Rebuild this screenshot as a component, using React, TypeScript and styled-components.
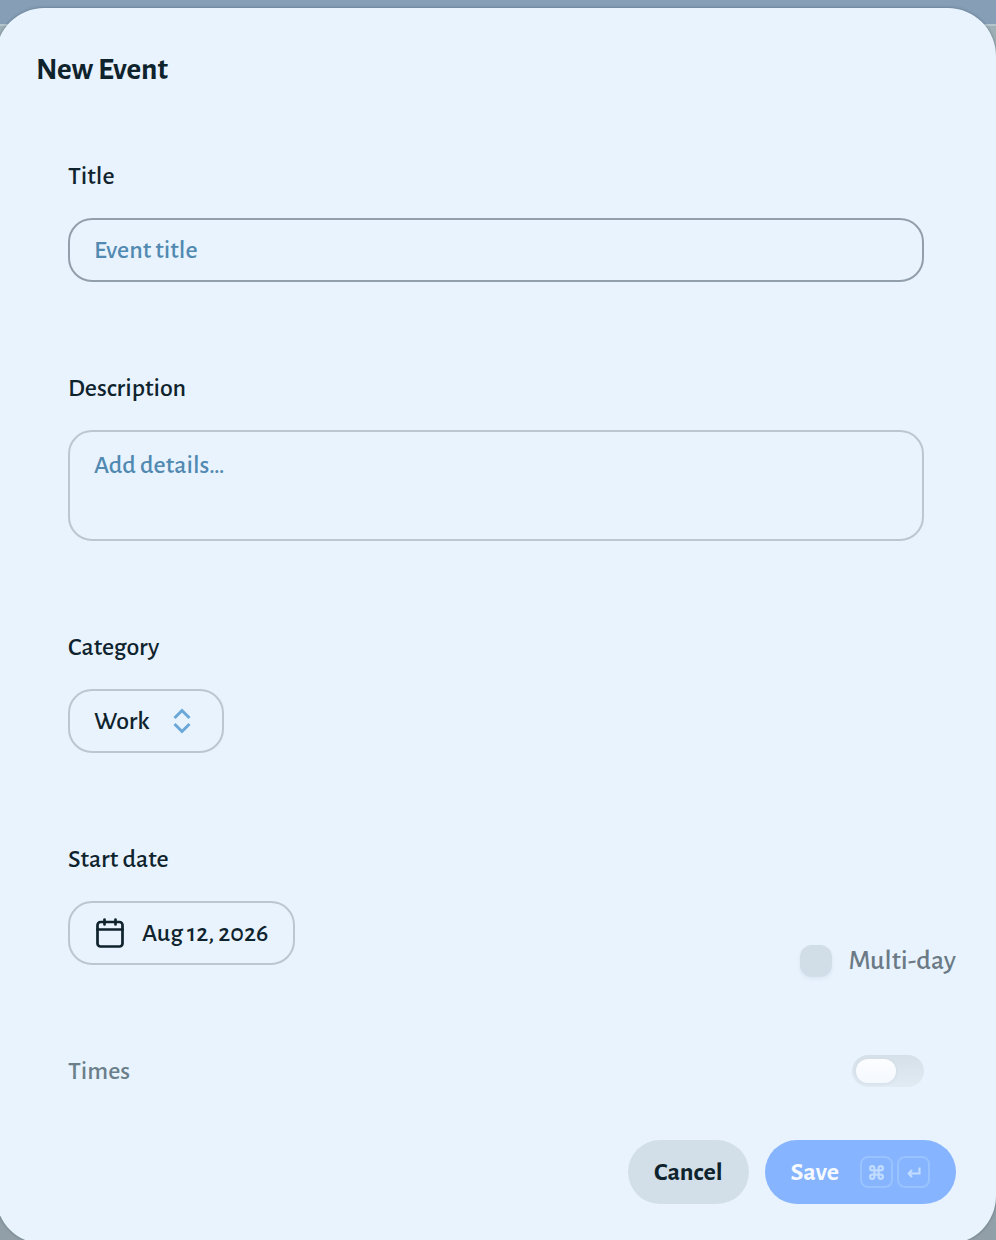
import React, { useState } from "react";
import styled, { createGlobalStyle } from "styled-components";

const ink = "#0f232d";
const edge = "#bcc6d0";
const edgeFocus = "#929fab";

const GlobalStyle = createGlobalStyle`
  *, *::before, *::after { box-sizing: border-box; }
  html { height: 100%; }
  body {
    margin: 0;
    min-height: 100%;
    overflow: hidden;
    color: ${ink};
    font-family: "Alegreya Sans", Lato, "Open Sans", sans-serif;
    font-weight: 500;
    background: linear-gradient(#869eb6 0 24px, #b4c5cd 24px 26px, #9eafb6 26px, #919fa8 100%) fixed;
  }
  button, input, select, textarea { font: inherit; color: inherit; margin: 0; }
`;

const Dialog = styled.form`
  display: flex;
  flex-direction: column;
  margin: 8px 0 0 -4px;
  padding: 40px;
  border-radius: 48px;
  background: #e8f3fe;
  box-shadow: 0 0 3px rgba(15, 35, 45, 0.4);
`;

const Heading = styled.h1`
  margin: 0;
  font-size: 31px;
  line-height: 44px;
  font-weight: 700;
`;

const Fields = styled.div`
  display: flex;
  flex-direction: column;
  gap: 92px;
  padding: 70px 32px 0;
`;

const Field = styled.div`
  display: flex;
  flex-direction: column;
  align-items: flex-start;
  gap: 28px;
`;

const Label = styled.label<{ $faded?: boolean }>`
  font-size: 26px;
  line-height: 28px;
  color: ${(p) => (p.$faded ? "#6b7f8a" : ink)};
`;

const TextInput = styled.input`
  width: 100%;
  height: 64px;
  padding: 0 24px;
  border: 2px solid ${edgeFocus};
  border-radius: 24px;
  outline: none;
  background: transparent;
  font-size: 26px;
  &::placeholder { color: #5189b1; opacity: 1; }
`;

const TextArea = styled.textarea`
  display: block;
  width: 100%;
  height: 111px;
  padding: 19px 24px;
  border: 2px solid ${edge};
  border-radius: 24px;
  outline: none;
  resize: none;
  background: transparent;
  font-size: 26px;
  line-height: 28px;
  &::placeholder { color: #5189b1; opacity: 1; }
`;

const SelectWrap = styled.div`
  position: relative;
  svg {
    position: absolute;
    right: 32px;
    top: 18px;
    pointer-events: none;
  }
`;

const Select = styled.select`
  appearance: none;
  width: 156px;
  height: 64px;
  padding: 0 24px;
  border: 2px solid ${edge};
  border-radius: 24px;
  background: transparent;
  font-size: 26px;
`;

const DateButton = styled.button`
  display: flex;
  align-items: center;
  gap: 16px;
  height: 64px;
  padding: 0 25px 0 24px;
  border: 2px solid ${edge};
  border-radius: 24px;
  background: transparent;
  font-size: 26px;
`;

const DateRow = styled.div`
  display: flex;
  justify-content: space-between;
  align-items: flex-end;
  margin-right: -32px;
`;

const CheckLabel = styled.label`
  display: flex;
  align-items: center;
  gap: 16px;
  margin-bottom: -12px;
  font-size: 28px;
  line-height: 32px;
  color: #6b7a85;
`;

const Checkbox = styled.input`
  appearance: none;
  width: 32px;
  height: 32px;
  border-radius: 12px;
  background: #d2dee7;
  box-shadow: 0 2px 4px rgba(15, 35, 45, 0.06);
  &:checked { background: #86b4fe; }
`;

const TimesRow = styled.div`
  display: flex;
  justify-content: space-between;
  align-items: center;
  margin-top: -2px;
`;

const Switch = styled.input`
  appearance: none;
  width: 72px;
  height: 32px;
  padding: 4px;
  border-radius: 16px;
  background: linear-gradient(#d5e0e9, #e1ebf4);
  &::before {
    content: "";
    display: block;
    width: 40px;
    height: 24px;
    border-radius: 12px;
    background: linear-gradient(#fcfdff, #f4f9fe);
    box-shadow: 0 1px 4px rgba(15, 35, 45, 0.06);
  }
  &:checked::before { margin-left: 24px; }
`;

const Footer = styled.footer`
  display: flex;
  justify-content: flex-end;
  gap: 16px;
  padding-top: 53px;
`;

const Button = styled.button<{ $primary?: boolean }>`
  display: flex;
  align-items: center;
  height: 64px;
  padding: 0 26px;
  border: 0;
  border-radius: 32px;
  font-size: 26px;
  font-weight: 700;
  color: ${(p) => (p.$primary ? "#f6faff" : ink)};
  background: ${(p) => (p.$primary ? "#86b4fe" : "#d3dfe8")};
`;

const Keys = styled.span`
  display: flex;
  gap: 4px;
  margin-left: 21px;
`;

const Key = styled.kbd`
  display: flex;
  align-items: center;
  justify-content: center;
  width: 33px;
  height: 32px;
  border: 2px solid #99c3fe;
  border-radius: 8px;
  color: #c1dcff;
`;

const line = {
  fill: "none",
  stroke: "currentColor",
  strokeLinecap: "round" as const,
  strokeLinejoin: "round" as const,
  "aria-hidden": true,
};

const Chevrons = () => (
  <svg width="20" height="28" viewBox="0 0 20 28" {...line} stroke="#6aa8d8" strokeWidth="3" strokeLinecap="butt" strokeLinejoin="miter">
    <path d="M2.500 11 10 3.500l7.500 7.500M2.500 17l7.500 7.500 7.500-7.500" />
  </svg>
);

const CalendarIcon = () => (
  <svg width="32" height="32" viewBox="0 0 32 32" {...line} strokeWidth="2.7">
    <rect x="3.500" y="5" width="25" height="24.500" rx="3" />
    <path d="M3.500 12.500h25M10.500 2.500v5M21.500 2.500v5" />
  </svg>
);

const CommandIcon = () => (
  <svg width="17" height="17" viewBox="0 0 24 24" {...line} strokeWidth="3">
    <path d="M15 6v12a3 3 0 1 0 3-3H6a3 3 0 1 0 3 3V6a3 3 0 1 0-3 3h12a3 3 0 1 0-3-3" />
  </svg>
);

const ReturnIcon = () => (
  <svg width="16" height="16" viewBox="0 0 16 16" {...line} strokeWidth="2.200" strokeLinecap="butt" strokeLinejoin="miter">
    <path d="M13.500 3.500v6H4" />
    <path d="M6 6 2.800 9.500l3.200 3.500" />
  </svg>
);

export default function App() {
  const [title, setTitle] = useState("");
  const [details, setDetails] = useState("");
  return (
    <>
      <GlobalStyle />
      <Dialog role="dialog" aria-labelledby="heading" onSubmit={(e) => e.preventDefault()}>
        <Heading id="heading">New Event</Heading>
        <Fields>
          <Field>
            <Label htmlFor="title">Title</Label>
            <TextInput id="title" placeholder="Event title" value={title} onChange={(e) => setTitle(e.target.value)} />
          </Field>
          <Field>
            <Label htmlFor="details">Description</Label>
            <TextArea id="details" placeholder="Add details…" value={details} onChange={(e) => setDetails(e.target.value)} />
          </Field>
          <Field>
            <Label htmlFor="category">Category</Label>
            <SelectWrap>
              <Select id="category" defaultValue="Work">
                <option>Work</option>
              </Select>
              <Chevrons />
            </SelectWrap>
          </Field>
          <DateRow>
            <Field>
              <Label htmlFor="start">Start date</Label>
              <DateButton id="start" type="button">
                <CalendarIcon />
                Aug 12, 2026
              </DateButton>
            </Field>
            <CheckLabel>
              <Checkbox type="checkbox" />
              Multi-day
            </CheckLabel>
          </DateRow>
          <TimesRow>
            <Label htmlFor="times" $faded>Times</Label>
            <Switch id="times" type="checkbox" role="switch" />
          </TimesRow>
        </Fields>
        <Footer>
          <Button type="button">Cancel</Button>
          <Button type="submit" $primary>
            Save
            <Keys>
              <Key><CommandIcon /></Key>
              <Key><ReturnIcon /></Key>
            </Keys>
          </Button>
        </Footer>
      </Dialog>
    </>
  );
}
